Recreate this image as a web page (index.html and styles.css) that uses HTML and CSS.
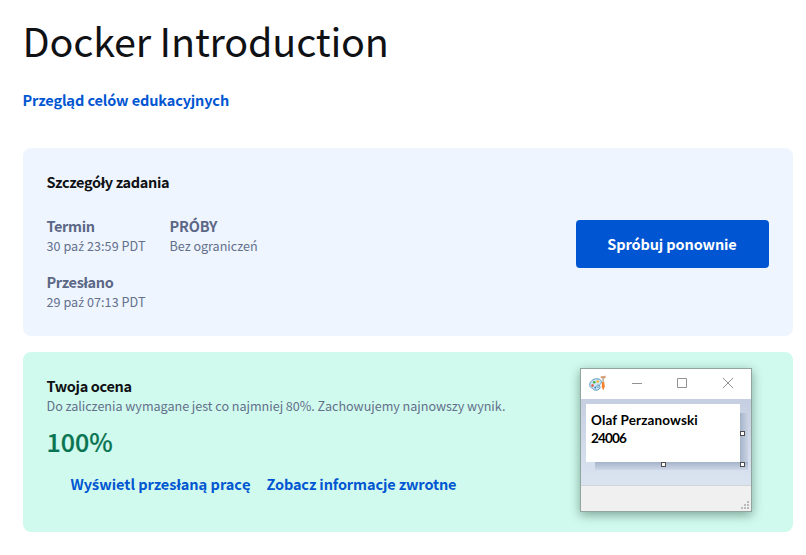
FILE: index.html
```html
<!DOCTYPE html>
<html lang="pl">
<head>
<meta charset="utf-8">
<title>Docker Introduction</title>
<link rel="stylesheet" href="styles.css">
</head>
<body>
<main class="page">
  <h1 class="title"><span>Docker Introduction</span></h1>
  <a class="link goals"><span>Przegląd celów edukacyjnych</span></a>
  <section class="card details">
    <div class="details-info">
      <h2 class="heading"><span>Szczegóły zadania</span></h2>
      <div class="facts">
        <div class="fact"><h3 class="label"><span>Termin</span></h3><p class="value"><span class="t-date">30 pa<b class="alt">ź</b> 23:59 PDT</span></p></div>
        <div class="fact"><h3 class="label"><span class="t-tries">PRÓBY</span></h3><p class="value"><span>Bez ograniczeń</span></p></div>
        <div class="fact"><h3 class="label"><span>Przesłano</span></h3><p class="value"><span class="t-date">29 pa<b class="alt">ź</b> 07:13 PDT</span></p></div>
      </div>
    </div>
    <button class="button"><span>Spróbuj ponownie</span></button>
  </section>
  <section class="card grade">
    <div class="grade-info">
      <h2 class="heading"><span>Twoja ocena</span></h2>
      <p class="value"><span>Do zaliczenia wymagane jest co najmniej 80%. Zachowujemy najnowszy wynik.</span></p>
      <p class="score"><span>100%</span></p>
      <div class="links"><a class="link"><span class="t-view">Wy<b class="alt">ś</b>wietl przesłaną pracę</span></a><a class="link"><span>Zobacz informacje zwrotne</span></a></div>
    </div>
    <div class="window">
      <div class="titlebar">
        <svg class="paint" viewBox="0 0 17 17">
          <path d="M.8 10.500C.3 6.500 4 3.800 8 3.800c3.500 0 4.800 2 4.200 4-.3 1.500-1.700 1.500-1.700 2.700 0 1 1 1.500.5 2.500-1 2-3.500 2.600-5.700 2-1-.3-.8-1.700-2-2C1.800 12.700 1 12 .8 10.500Z" fill="#cfe7f4" stroke="#5b9cc0"/>
          <circle cx="3.500" cy="10.500" r="1.200" fill="#e24b37"/>
          <circle cx="5.200" cy="7.300" r="1.300" fill="#49aa49"/>
          <circle cx="8.800" cy="6.500" r="1.300" fill="#f1b52d"/>
          <circle cx="6.300" cy="12.600" r="1.100" fill="#3d8dd0"/>
          <circle cx="9" cy="11.200" r="1.200" fill="#fff" stroke="#397d9f" stroke-width=".7"/>
          <path d="M13 7h2.200l.6 4.500-1.600 4-1.500-4Z" fill="#f3822e"/>
          <path d="M13.500 3h1.200v4h-1.200Z" fill="#a7937e"/>
          <path d="M11.700 1.200h3L16.500.5v2.700h-4.800Z" fill="#cf9871"/>
        </svg>
        <svg class="controls" viewBox="0 0 102 12" fill="none" stroke="#929292"><path d="M0 6.500h10M45.500 1.500h9v9h-9ZM91 1l10 10M101 1 91 11"/></svg>
      </div>
      <div class="canvas">
        <div class="paper"><span class="t-name">Olaf Perzanowski</span><span class="t-number">24006</span></div>
        <i class="handle handle-right"></i><i class="handle handle-bottom"></i><i class="handle handle-corner"></i>
      </div>
      <div class="statusbar"><svg class="grip" viewBox="0 0 8 8" fill="#bbb"><path d="M6 0h2v2H6ZM3 3h2v2H3ZM6 3h2v2H6ZM0 6h2v2H0ZM3 6h2v2H3ZM6 6h2v2H6Z"/></svg></div>
    </div>
  </section>
</main>
</body>
</html>
```
FILE: styles.css
```css
* { box-sizing: border-box; }
body { margin: 0; background: #fff; color: #0f1114; font-family: "Noto Sans CJK SC", "Open Sans", sans-serif; }
h1, h2, h3, p { margin: 0; }
span { white-space: nowrap; }
.page { width: 806px; height: 555px; padding: 15px 13px 0 23px; overflow: hidden; }
.title { height: 50px; font-size: 39.5px; line-height: 50px; font-weight: 400; letter-spacing: -.18px; margin-left: -.5px; }
.link { color: #0056d2; font-size: 14.5px; line-height: 24px; font-weight: 700; letter-spacing: -.12px; }
.goals { display: block; height: 24px; margin-top: 23px; }
.card { display: flex; justify-content: space-between; border-radius: 8px; }
.details { height: 188px; margin-top: 36px; padding: 24px; background: #eef5ff; align-items: center; }
.details-info { align-self: flex-start; }
.heading { height: 20px; font-size: 14.5px; line-height: 20px; font-weight: 700; letter-spacing: -.35px; }
.facts { display: grid; grid-template-columns: 99px 99px; column-gap: 24px; row-gap: 16px; margin-top: 24px; }
.fact { height: 40px; }
.label { color: #5b6785; font-size: 14.5px; line-height: 20px; height: 20px; font-weight: 700; letter-spacing: -.35px; }
.value { color: #636f8b; font-size: 12.6px; line-height: 20px; height: 20px; letter-spacing: -.03px; }
.heading, .label, .value, .score, .link { text-indent: -.5px; }
.alt { font-family: "Open Sans", sans-serif; font-weight: inherit; line-height: 1; }
.t-date { letter-spacing: .04px; }
.t-tries { letter-spacing: -.2px; }
.button { width: 193px; height: 48px; margin-top: 4px; padding: 0 1px 0 0; border: 0; border-radius: 4px; background: #0056d2; color: #fff; font: 700 14.5px/24px "Noto Sans CJK SC", sans-serif; letter-spacing: -.12px; }
.grade { position: relative; height: 180px; margin-top: 16px; padding: 24px; background: #d0faed; }
.score { height: 36px; margin-top: 7px; color: #087451; font-size: 25px; line-height: 36px; font-weight: 500; }
.score span { -webkit-text-stroke: .2px #087451; }
.links { display: flex; gap: 16.5px; margin: 13px 0 0 24px; }
.t-view { letter-spacing: -.03px; }
.window { position: absolute; left: 557px; top: 16px; width: 172px; height: 144px; border: 1px solid #91a59f; background: #fff; box-shadow: 0 3px 10px rgba(0, 40, 28, .4); }
.titlebar { display: flex; align-items: center; height: 30px; padding-left: 8px; }
.paint { width: 17px; height: 17px; margin-top: -2px; }
.controls { width: 102px; height: 12px; margin-left: 26px; margin-top: -2px; }
.canvas { position: relative; height: 86px; padding: 5px; background: linear-gradient(#c5cfe1, #dae4f1); }
.paper { position: relative; display: flex; flex-direction: column; width: 154px; height: 58px; padding: 7px 5px; background: #fff; color: #000; font: 700 13.5px/18px Lato, sans-serif; }
.paper::before { content: ""; position: absolute; left: 154px; top: 9px; width: 8px; height: 57px; background: linear-gradient(90deg, #a5b3c9, #c9d3e4); }
.paper::after { content: ""; position: absolute; left: 9px; top: 58px; width: 153px; height: 8px; background: linear-gradient(#a5b3c9, #ccd6e6); }
.t-name { letter-spacing: .14px; }
.t-number { letter-spacing: -.8px; }
.handle { position: absolute; width: 5px; height: 5px; border: 1px solid #4d4d4d; background: #fff; }
.handle-right { left: 159px; top: 32px; }
.handle-bottom { left: 80px; top: 63px; }
.handle-corner { left: 159px; top: 63px; }
.statusbar { position: relative; height: 26px; border-top: 1px solid #d2d5d8; background: #f0f0f0; }
.grip { position: absolute; right: 2px; bottom: 2px; width: 8px; height: 8px; }
```
